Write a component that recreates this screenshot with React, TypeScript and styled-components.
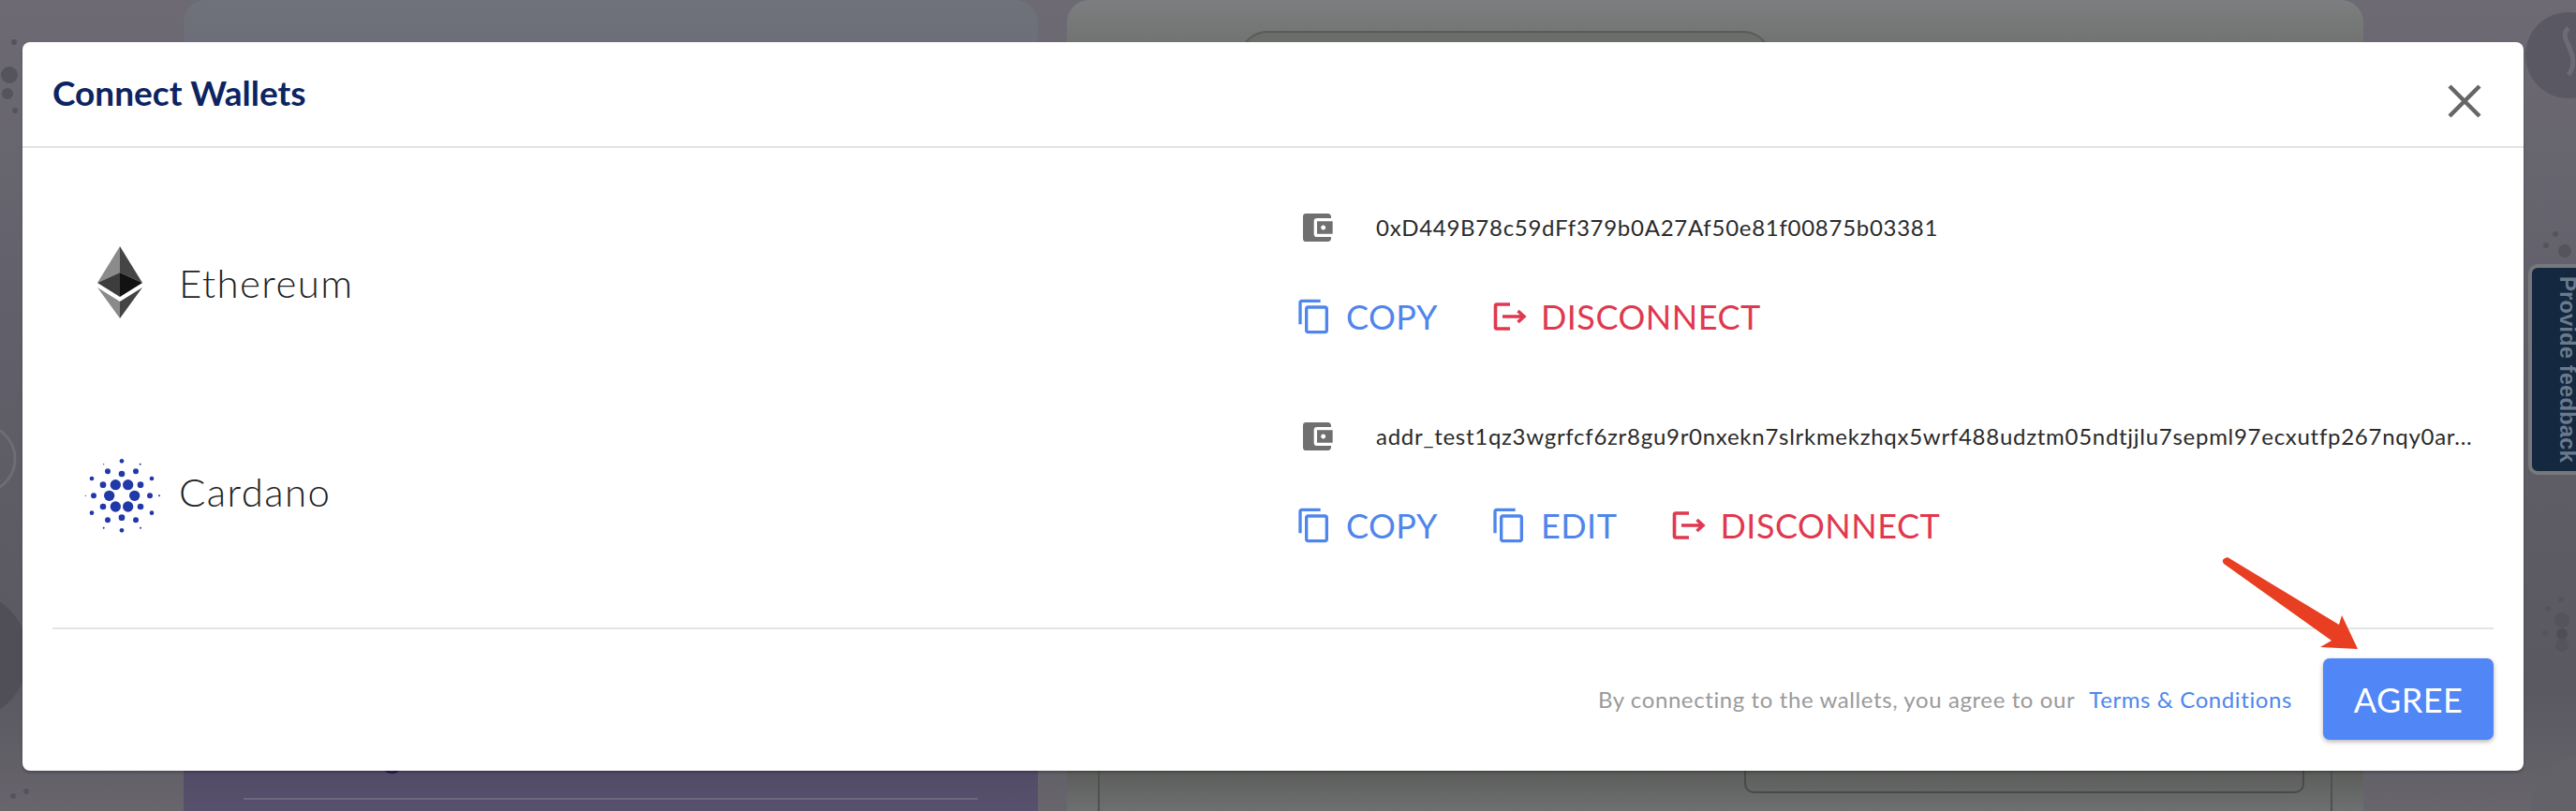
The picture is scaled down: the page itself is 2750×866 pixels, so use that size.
import React from 'react';
import styled, { createGlobalStyle } from 'styled-components';
import { MdAccountBalanceWallet, MdContentCopy } from 'react-icons/md';

const GlobalStyle = createGlobalStyle`
  html, body {
    margin: 0;
    padding: 0;
    background: #625f69;
  }
  * {
    box-sizing: border-box;
  }
`;

const Page = styled.div`
  position: relative;
  width: 2750px;
  height: 866px;
  overflow: hidden;
  display: flex;
  padding-left: 196px;
  gap: 31px;
  font-family: 'Lato', 'Open Sans', sans-serif;
  background: linear-gradient(180deg, #6d6a74 0%, #605e68 45%, #5a5860 85%, #68666c 100%);
`;

const Decor = styled.svg`
  position: absolute;
  inset: 0;
`;

const LeftPanel = styled.div`
  position: relative;
  width: 912px;
  height: 866px;
  padding: 0 64px 12px;
  display: flex;
  flex-direction: column;
  justify-content: flex-end;
  border-radius: 24px 24px 0 0;
  background: linear-gradient(180deg, #6f727b 0%, #6b6c78 8%, #4e4860 92%, #58516e 100%);
`;

const PanelHeading = styled.div`
  margin: 0 0 24px 52px;
  font-size: 36px;
  line-height: 44px;
  font-weight: 500;
  color: #211c50;
`;

const PanelRule = styled.div`
  height: 2px;
  background: #6c697a;
`;

const RightPanel = styled.div`
  position: relative;
  width: 1384px;
  height: 866px;
  padding-top: 33px;
  display: flex;
  flex-direction: column;
  border-radius: 24px 24px 0 0;
  background: linear-gradient(180deg, #7c7e7f 0%, #727473 5%, #5b5d5b 95%, #6e6f70 100%);
`;

const TabPill = styled.div`
  width: 568px;
  height: 60px;
  margin-left: 184px;
  border: 2px solid #5a5c59;
  border-radius: 30px;
  background: #6b6d6a;
  flex-shrink: 0;
`;

const Card = styled.div`
  flex: 1;
  margin: 40px 33px 0;
  padding: 0 28px 19px 0;
  display: flex;
  justify-content: flex-end;
  align-items: flex-end;
  border-left: 2px solid #4f514f;
  border-right: 2px solid #4f514f;
`;

const InputBox = styled.div`
  width: 598px;
  height: 60px;
  border: 2px solid #484a48;
  border-radius: 10px;
`;

const Modal = styled.div`
  position: absolute;
  top: 45px;
  left: 24px;
  width: 2670px;
  height: 778px;
  display: flex;
  flex-direction: column;
  background: #fff;
  border-radius: 8px;
  box-shadow: 0 2px 3px rgba(0, 0, 0, 0.25);
`;

const Header = styled.div`
  height: 113px;
  flex-shrink: 0;
  padding: 32px 45px 0 32px;
  display: flex;
  justify-content: space-between;
  align-items: flex-start;
  border-bottom: 2px solid #e1e5e5;
`;

const Title = styled.h2`
  margin: 0;
  font-size: 37px;
  line-height: 44px;
  font-weight: 700;
  color: #0c2461;
`;

const CloseIcon = styled.svg`
  width: 36px;
  height: 36px;
  margin-top: 13px;
  stroke: #666;
  stroke-width: 4.5;
  fill: none;
`;

const Body = styled.div`
  padding-top: 32px;
  flex: 1;
`;

const WalletRow = styled.div`
  height: 223px;
  display: grid;
  grid-template-columns: 1359px 1fr;
`;

const Chain = styled.div`
  padding: 0 0 0 49px;
  display: flex;
  align-items: center;
  gap: 8px;
`;

const LogoSlot = styled.div`
  width: 110px;
  height: 100px;
  display: flex;
  align-items: center;
  justify-content: center;
  flex-shrink: 0;
`;

const ChainName = styled.div`
  font-size: 42px;
  line-height: 52px;
  font-weight: 300;
  color: #1f1f1f;
  letter-spacing: 1.4px;
`;

const Account = styled.div`
  padding-top: 33px;
  display: flex;
  flex-direction: column;
  gap: 55px;
`;

const AddressLine = styled.div`
  display: flex;
  align-items: center;
  height: 40px;
  gap: 43px;
  padding-left: 3px;
  color: #707070;
`;

const Address = styled.span`
  font-size: 24px;
  line-height: 40px;
  color: #2a2a2a;
  letter-spacing: 0.72px;
  white-space: nowrap;
`;

const Actions = styled.div`
  display: flex;
  gap: 56px;
`;

const Action = styled.div<{ $danger?: boolean }>`
  display: flex;
  align-items: center;
  height: 40px;
  gap: 14px;
  font-size: 36px;
  font-weight: 400;
  letter-spacing: 0.5px;
  color: ${(p) => (p.$danger ? '#e0394f' : '#4f86ec')};
`;

const Footer = styled.div`
  margin: 0 32px;
  height: 153px;
  flex-shrink: 0;
  padding: 31px 0 33px;
  display: flex;
  justify-content: flex-end;
  align-items: center;
  border-top: 2px solid #e1e5e5;
`;

const Terms = styled.span`
  font-size: 24px;
  color: #9a9a9a;
  letter-spacing: 0.6px;
`;

const TermsLink = styled.a`
  margin: 0 33px 0 15px;
  font-size: 24px;
  color: #4f86ec;
  letter-spacing: 0.6px;
`;

const AgreeButton = styled.button`
  width: 182px;
  height: 87px;
  border: 0;
  border-radius: 7px;
  background: #5086f6;
  color: #fff;
  font-family: inherit;
  font-size: 36px;
  letter-spacing: 0.5px;
  box-shadow: 0 2px 5px rgba(0, 0, 0, 0.3);
`;

const Arrow = styled.svg`
  position: absolute;
  left: 2340px;
  top: 540px;
  width: 200px;
  height: 120px;
`;

const FeedbackTab = styled.div`
  position: absolute;
  top: 282px;
  left: 2699px;
  width: 70px;
  height: 225px;
  padding-left: 14px;
  display: flex;
  align-items: center;
  border: 4px solid #77787c;
  border-radius: 10px;
  background: #14283f;
  color: #6a7a8c;
  font-family: 'Liberation Sans', Arial, sans-serif;
  font-size: 24px;
  font-weight: 700;
  writing-mode: vertical-rl;
  justify-content: center;
`;

const cardanoDots: [number, number, number][] = [
  [151, 128, 17], [191, 128, 17], [131, 163, 17], [212, 163, 17], [151, 198, 17], [191, 198, 17],
  [111, 128, 10], [231, 128, 10], [171, 93, 10], [171, 233, 10], [111, 198, 10], [231, 198, 10],
  [126, 85, 9], [216, 85, 9], [126, 241, 9], [216, 241, 9], [81, 163, 9], [261, 163, 9],
  [75, 108, 7], [267, 108, 7], [75, 218, 7], [267, 218, 7], [171, 52, 7], [171, 274, 7],
  [291, 163, 3], [55, 163, 2], [113, 62, 2], [230, 62, 3], [113, 266, 3], [231, 266, 3],
];

function EthereumLogo() {
  return (
    <svg width="48" height="77" viewBox="0 0 48 77">
      <polygon points="24,0 0,39 24,28" fill="#8b8b8b" />
      <polygon points="24,0 48,39 24,28" fill="#454545" />
      <polygon points="0,39 24,28 24,54" fill="#3d3d3d" />
      <polygon points="48,39 24,28 24,54" fill="#121212" />
      <polygon points="0,44 24,59 24,77" fill="#8a8a8a" />
      <polygon points="48,44 24,59 24,77" fill="#444" />
    </svg>
  );
}

function CardanoLogo() {
  return (
    <svg width="110" height="100" viewBox="0 0 330 300">
      {cardanoDots.map(([cx, cy, r]) => (
        <circle key={`${cx}-${cy}`} cx={cx} cy={cy} r={r} fill="#2139a8" />
      ))}
    </svg>
  );
}

function DisconnectIcon() {
  return (
    <svg width="40" height="40" viewBox="0 0 40 40" fill="none" stroke="currentColor" strokeWidth="3.6">
      <path d="M21 7H7a1.5 1.5 0 0 0-1.500 1.500v23A1.500 1.500 0 0 0 7 33h14" />
      <path d="M13 20h23M29.500 14l6.500 6-6.500 6" />
    </svg>
  );
}

function App() {
  return (
    <Page>
      <GlobalStyle />
      <Decor width="2750" height="866" viewBox="0 0 2750 866" fill="#55535c">
        <circle cx="10" cy="80" r="9" />
        <circle cx="8" cy="100" r="6" />
        <circle cx="15" cy="45" r="3" />
        <circle cx="16" cy="118" r="3" />
        <circle cx="-40" cy="700" r="70" fill="#504e56" />
        <circle cx="-20" cy="490" r="36" fill="none" stroke="#6e6c74" strokeWidth="3" />
        <circle cx="14" cy="850" r="3" />
        <circle cx="28" cy="845" r="3" />
        <circle cx="2742" cy="59" r="46" fill="#5a5862" />
        <path d="M2742 30c-14 10 16 28 0 50" fill="none" stroke="#6c6a74" strokeWidth="5" />
        <circle cx="2738" cy="268" r="7" />
        <circle cx="2728" cy="250" r="3" />
        <circle cx="2718" cy="262" r="3" />
        <circle cx="2735" cy="662" r="8" />
        <circle cx="2735" cy="677" r="6" fill="#4f4d56" />
        <circle cx="2717" cy="676" r="3" />
        <circle cx="2735" cy="689" r="7" />
        <circle cx="2720" cy="650" r="3" />
        <circle cx="2734" cy="640" r="3" />
        <circle cx="2765" cy="870" r="65" fill="#646269" />
      </Decor>
      <LeftPanel>
        <PanelHeading>Staking</PanelHeading>
        <PanelRule />
      </LeftPanel>
      <RightPanel>
        <TabPill />
        <Card>
          <InputBox />
        </Card>
      </RightPanel>
      <FeedbackTab>Provide feedback</FeedbackTab>
      <Modal>
        <Header>
          <Title>Connect Wallets</Title>
          <CloseIcon viewBox="0 0 36 36">
            <path d="M2 2l32 32M34 2L2 34" />
          </CloseIcon>
        </Header>
        <Body>
          <WalletRow>
            <Chain>
              <LogoSlot>
                <EthereumLogo />
              </LogoSlot>
              <ChainName>Ethereum</ChainName>
            </Chain>
            <Account>
              <AddressLine>
                <MdAccountBalanceWallet size={40} />
                <Address>0xD449B78c59dFf379b0A27Af50e81f00875b03381</Address>
              </AddressLine>
              <Actions>
                <Action>
                  <MdContentCopy size={40} />
                  COPY
                </Action>
                <Action $danger>
                  <DisconnectIcon />
                  DISCONNECT
                </Action>
              </Actions>
            </Account>
          </WalletRow>
          <WalletRow>
            <Chain>
              <LogoSlot>
                <CardanoLogo />
              </LogoSlot>
              <ChainName>Cardano</ChainName>
            </Chain>
            <Account>
              <AddressLine>
                <MdAccountBalanceWallet size={40} />
                <Address>addr_test1qz3wgrfcf6zr8gu9r0nxekn7slrkmekzhqx5wrf488udztm05ndtjjlu7sepml97ecxutfp267nqy0ar...</Address>
              </AddressLine>
              <Actions>
                <Action>
                  <MdContentCopy size={40} />
                  COPY
                </Action>
                <Action>
                  <MdContentCopy size={40} />
                  EDIT
                </Action>
                <Action $danger>
                  <DisconnectIcon />
                  DISCONNECT
                </Action>
              </Actions>
            </Account>
          </WalletRow>
        </Body>
        <Footer>
          <Terms>By connecting to the wallets, you agree to our</Terms>
          <TermsLink>Terms &amp; Conditions</TermsLink>
          <AgreeButton>AGREE</AgreeButton>
        </Footer>
        <Arrow viewBox="2364 585 200 120">
          <path
            d="M2378 595 L2497 667 L2500 657 L2517 693 L2477 691 L2489 684 L2374 602 Q2370 597 2378 595 Z"
            fill="#e83e22"
          />
        </Arrow>
      </Modal>
    </Page>
  );
}

export default App;
